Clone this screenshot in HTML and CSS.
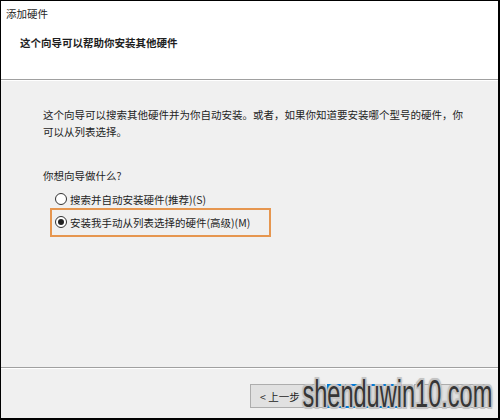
FILE: index.html
```html
<!DOCTYPE html>
<html lang="zh-CN">
<head>
    <meta charset="UTF-8">
    <meta name="viewport" content="width=device-width, initial-scale=1.0">
    <title>添加硬件</title>
    <link rel="stylesheet" href="styles.css">
</head>
<body>
  <div class="wizard">
    <div class="header">
      <p class="title">添加硬件</p>
      <h1 class="heading">这个向导可以帮助你安装其他硬件</h1>
    </div>
    <div class="content">
      <p class="intro">这个向导可以搜索其他硬件并为你自动安装。或者，如果你知道要安装哪个型号的硬件，你可以从列表选择。</p>
      <p class="question">你想向导做什么?</p>
      <div class="options">
        <label class="option">
          <span class="radio"></span>
          <span>搜索并自动安装硬件(推荐)(S)</span>
        </label>
        <label class="option selected">
          <span class="radio checked"></span>
          <span>安装我手动从列表选择的硬件(高级)(M)</span>
        </label>
      </div>
    </div>
    <div class="footer">
      <button class="btn">&lt; 上一步</button>
      <button class="btn primary"></button>
      <button class="btn cancel"></button>
      <div class="watermark">shenduwin10.com</div>
    </div>
  </div>
</body>
</html>
```

FILE: styles.css
```css
*{
    margin: 0;
    padding: 0;
    box-sizing: border-box;
}
body{
    background-color: #000;
    font-family: "Noto Sans CJK SC", "Liberation Sans", sans-serif;
    font-size: 10.5px;
    color: #1e1e1e;
}
.wizard{
    width: 500px;
    height: 420px;
    border-top: 1px solid #000;
    border-left: 1px solid #000;
    border-right: 2px solid #000;
    border-bottom: 2px solid #000;
    background-color: #f0f0f0;
    display: flex;
    flex-direction: column;
    position: relative;
}
.header{
    height: 79px;
    background-color: #fff;
    border-bottom: 1px solid #a0a0a0;
    padding: 6px 0 0 5px;
}
.title{
    line-height: 14px;
}
.heading{
    font-size: 10.5px;
    font-weight: bold;
    line-height: 14px;
    margin: 15px 0 0 14px;
}
.content{
    flex: 1;
    border-top: 1px solid #fff;
    border-bottom: 1px solid #a0a0a0;
    padding: 25px 30px 0 42px;
}
.intro{
    line-height: 17px;
    width: 420px;
}
.question{
    line-height: 17px;
    margin-top: 27px;
}
.options{
    margin: 5px 0 0 7px;
    display: flex;
    flex-direction: column;
}
.option{
    display: flex;
    align-items: center;
    gap: 3px;
    height: 20px;
    padding-left: 5px;
}
.option.selected{
    width: 221px;
    height: 29px;
    margin-top: -1px;
    border: 2px solid #e6964f;
    padding: 1px 0 2px 3px;
}
.radio{
    width: 12px;
    height: 12px;
    border: 1px solid #333;
    border-radius: 50%;
    background-color: #fff;
    display: flex;
    justify-content: center;
    align-items: center;
}
.radio.checked::after{
    content: "";
    width: 6px;
    height: 6px;
    border-radius: 50%;
    background-color: #222;
}
.footer{
    height: 50px;
    border-top: 1px solid #fff;
    display: flex;
    justify-content: flex-end;
    align-items: flex-start;
    padding: 15px 9px 0 0;
    gap: 2px;
}
.btn{
    width: 75px;
    height: 24px;
    font-family: inherit;
    font-size: 10.5px;
    color: #1e1e1e;
    background-color: #e1e1e1;
    border: 1px solid #adadad;
    text-align: left;
    padding-left: 9px;
}
.btn.primary{
    border: 2px solid #0078d7;
}
.btn.cancel{
    margin-left: 10px;
}
.watermark{
    position: absolute;
    right: 6px;
    bottom: 2px;
    font-family: "Liberation Sans", sans-serif;
    font-size: 38px;
    line-height: 44px;
    color: #363636;
    transform: scaleX(0.62);
    transform-origin: right bottom;
    text-shadow: 2px 0 0 #c4c4c4, -2px 0 0 #c4c4c4, 0 2px 0 #c4c4c4, 0 -2px 0 #c4c4c4,
        2px 2px 0 #c4c4c4, -2px -2px 0 #c4c4c4, 2px -2px 0 #c4c4c4, -2px 2px 0 #c4c4c4,
        0 0 4px #888;
}
```
